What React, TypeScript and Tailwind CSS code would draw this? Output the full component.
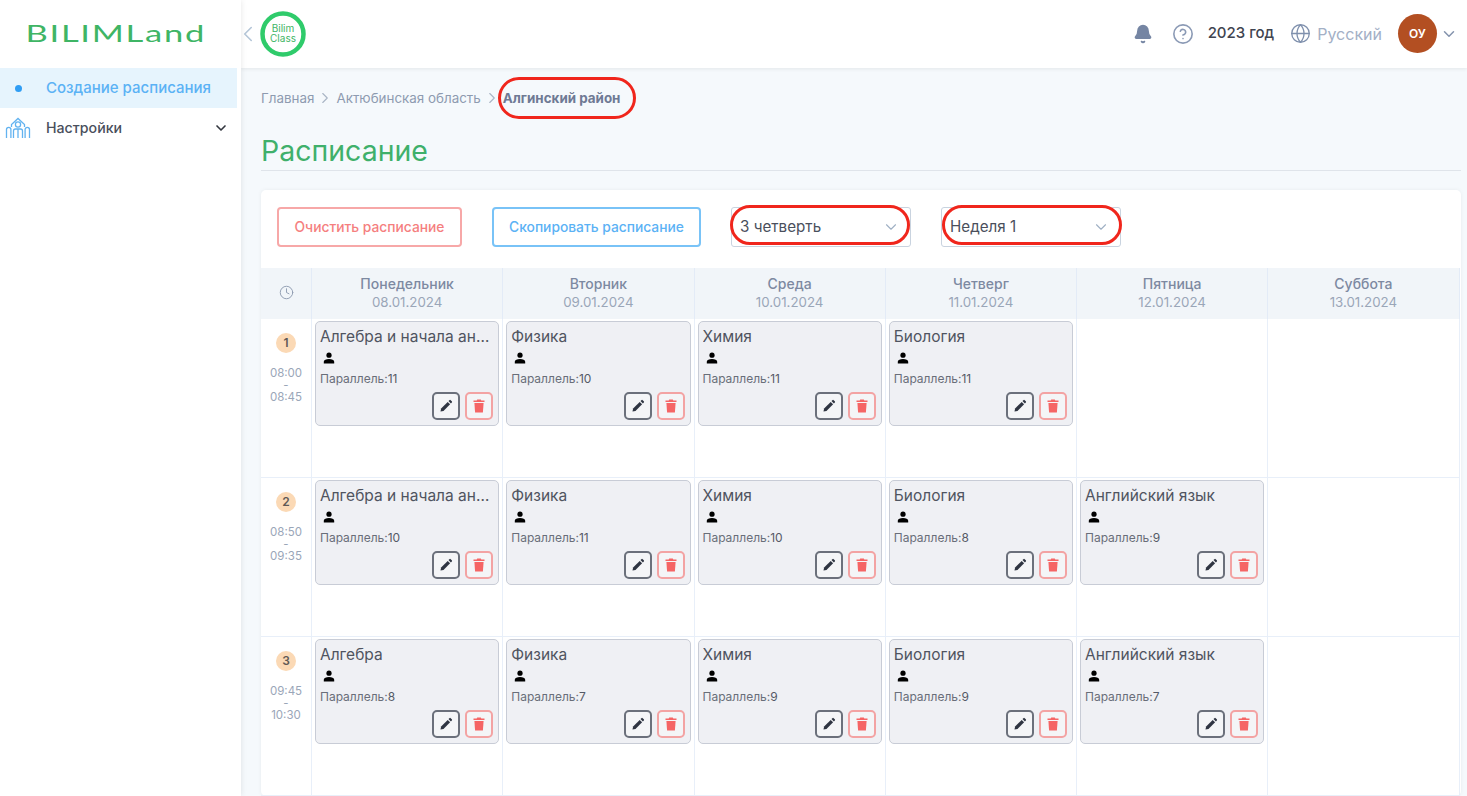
import React from 'react';
import { Bell, ChevronDown, ChevronLeft, ChevronRight, CircleHelp, Clock, Globe } from 'lucide-react';

type Lesson = { name: string; grade: number };

const days = [
  { name: 'Понедельник', date: '08.01.2024' },
  { name: 'Вторник', date: '09.01.2024' },
  { name: 'Среда', date: '10.01.2024' },
  { name: 'Четверг', date: '11.01.2024' },
  { name: 'Пятница', date: '12.01.2024' },
  { name: 'Суббота', date: '13.01.2024' },
];

const rows: { num: number; from: string; to: string; lessons: (Lesson | null)[] }[] = [
  {
    num: 1,
    from: '08:00',
    to: '08:45',
    lessons: [
      { name: 'Алгебра и начала анализа', grade: 11 },
      { name: 'Физика', grade: 10 },
      { name: 'Химия', grade: 11 },
      { name: 'Биология', grade: 11 },
      null,
      null,
    ],
  },
  {
    num: 2,
    from: '08:50',
    to: '09:35',
    lessons: [
      { name: 'Алгебра и начала анализа', grade: 10 },
      { name: 'Физика', grade: 11 },
      { name: 'Химия', grade: 10 },
      { name: 'Биология', grade: 8 },
      { name: 'Английский язык', grade: 9 },
      null,
    ],
  },
  {
    num: 3,
    from: '09:45',
    to: '10:30',
    lessons: [
      { name: 'Алгебра', grade: 8 },
      { name: 'Физика', grade: 7 },
      { name: 'Химия', grade: 9 },
      { name: 'Биология', grade: 9 },
      { name: 'Английский язык', grade: 7 },
      null,
    ],
  },
];

const PersonIcon = () => (
  <svg viewBox="0 0 12 12" className="w-3 h-3 text-black" fill="currentColor">
    <circle cx="6" cy="3.2" r="2.6" />
    <path d="M0.8 11.5V9.8C0.8 8 3.2 7 6 7s5.2 1 5.2 2.8v1.7z" />
  </svg>
);

const PencilIcon = () => (
  <svg viewBox="0 0 14 14" className="w-3.5 h-3.5 text-[#2f3542]" fill="currentColor">
    <path d="M1.5 12.5l.6-3 6.6-6.6 2.4 2.4-6.6 6.6z" />
    <path d="M9.5 2.1l.9-.9a.9.9 0 011.3 0l1.1 1.1a.9.9 0 010 1.3l-.9.9z" />
  </svg>
);

const TrashIcon = () => (
  <svg viewBox="0 0 12 14" className="w-3 h-3.5 text-[#f56565]" fill="currentColor">
    <path d="M4.2 0.5h3.6l.5 1H11.5v1.6H.5V1.5h3.2z" />
    <path d="M1.4 4h9.2l-.7 9.5H2.1z" />
  </svg>
);

const SchoolIcon = () => (
  <svg viewBox="0 0 26 22" className="w-[26px] h-[22px] text-[#63b3f0]" fill="none" stroke="currentColor" strokeWidth="1.3">
    <path d="M6.5 10V7.5L13 1.5l6.5 6V10" />
    <circle cx="13" cy="7.5" r="2.6" />
    <path d="M1.5 21v-8.5a2.2 2.2 0 014.4 0V21" />
    <path d="M20.1 21v-8.5a2.2 2.2 0 014.4 0V21" />
    <path d="M8.5 21v-7a2 2 0 012-2h5a2 2 0 012 2v7" />
    <path d="M13 12v9" />
  </svg>
);

const ClassLogo = () => (
  <div className="relative -ml-[1px] w-[46px] h-[46px] flex items-center justify-center">
    <svg viewBox="0 0 46 46" className="absolute inset-0 w-full h-full text-[#2fcb6b]" fill="none" stroke="currentColor" strokeWidth="4.5">
      <circle cx="23" cy="23" r="20.5" />
      <path d="M8 38l-1.500-5.500" strokeWidth="2" />
    </svg>
    <div className="flex flex-col items-center text-[#3fb565] text-[10px] leading-[9.5px]">
      <span>Bilim</span>
      <span>Class</span>
    </div>
  </div>
);

const LessonCard = ({ lesson }: { lesson: Lesson }) => (
  <div className="h-[105px] rounded-[5px] border border-[#c8ccd6] bg-[#eff0f4] px-[4px] pt-[4px] relative">
    <div className="text-[15.5px] leading-[22px] text-[#4f5460] truncate">{lesson.name}</div>
    <div className="h-[20px] pl-[3px] flex items-center">
      <PersonIcon />
    </div>
    <div className="text-[12px] leading-[16px] mt-[3px] text-[#696e79]">
      Параллель:<span className="text-[#555a66]">{lesson.grade}</span>
    </div>
    <div className="absolute right-[5px] bottom-[5px] flex gap-[5px]">
      <button className="w-[28px] h-[28px] rounded-[5px] border-2 border-[#6b707b] bg-[#f4f5f7] flex items-center justify-center">
        <PencilIcon />
      </button>
      <button className="w-[28px] h-[28px] rounded-[5px] border-2 border-[#f3a3a3] bg-[#f4f5f7] flex items-center justify-center">
        <TrashIcon />
      </button>
    </div>
  </div>
);

const SelectBox = ({ label, ringClass }: { label: string; ringClass: string }) => (
  <div className="relative w-[180px] h-[40px] rounded-[3px] border border-[#c9d3df] bg-white flex items-center justify-between pl-[8px] pr-[10px]">
    <span className="text-[15.2px] text-[#4a4f5c]">{label}</span>
    <ChevronDown className="w-[18px] h-[18px] text-[#9fb0c4]" strokeWidth={1.5} />
    <div className={ringClass} />
  </div>
);

export default function App() {
  return (
    <div className="h-[796px] w-[1467px] overflow-hidden flex bg-[#f5f9fc] font-['Inter','Liberation_Sans',sans-serif]">
      <aside className="w-[241px] shrink-0 bg-white shadow-[0_0_6px_rgba(0,0,0,0.1)] z-10">
        <div className="h-[68px] flex items-center justify-center pr-[9px] pb-[2px]">
          <span className="text-[#3fb565] text-[24px] font-['Lato',sans-serif] tracking-[1.2px] scale-x-[1.44] leading-none">
            BILIMLand
          </span>
        </div>
        <div className="h-[40px] w-[237px] bg-[#e6f4fd] flex items-center pl-[15px] gap-[24px]">
          <span className="w-[7px] h-[7px] rounded-full bg-[#2f9df4]" />
          <span className="text-[#5bb2f5] text-[15px] font-medium">Создание расписания</span>
        </div>
        <div className="h-[40px] flex items-center pl-[5px] pr-[12px]">
          <SchoolIcon />
          <span className="ml-[15px] text-[14.2px] font-medium text-[#4a4f5c] flex-1">Настройки</span>
          <ChevronDown className="w-[16px] h-[16px] text-[#33373f]" strokeWidth={2.5} />
        </div>
      </aside>

      <div className="flex-1 min-w-0 flex flex-col">
        <header className="h-[68px] shrink-0 bg-white shadow-[0_1px_4px_rgba(0,0,0,0.08)] flex items-center pb-[1px]">
          <ChevronLeft className="ml-[-6px] w-[26px] h-[26px] text-[#b5c6d8]" strokeWidth={1.5} />
          <ClassLogo />
          <div className="ml-auto flex items-center pr-[9px]">
            <Bell className="w-[20px] h-[20px] text-[#7585a3]" fill="#7585a3" />
            <CircleHelp className="ml-[19px] w-[22px] h-[22px] text-[#8b9ab5]" strokeWidth={1.75} />
            <span className="ml-[14px] text-[15px] font-medium text-[#3f4450]">2023 год</span>
            <Globe className="ml-[16px] w-[21px] h-[21px] text-[#7f90ad]" strokeWidth={1.5} />
            <span className="ml-[6px] text-[16px] text-[#a3b0c6]">Русский</span>
            <div className="ml-[16px] w-[39px] h-[39px] rounded-full bg-[#b34f22] flex items-center justify-center text-white text-[12px] font-semibold">
              ОУ
            </div>
            <ChevronDown className="ml-[3px] w-[18px] h-[18px] text-[#8493ad]" strokeWidth={2} />
          </div>
        </header>

        <main className="flex-1 min-h-0 pl-[20px] pr-[6px]">
          <nav className="h-[22px] mt-[19px] flex items-center text-[13.4px] text-[#8e9bb0]">
            <span>Главная</span>
            <ChevronRight className="mx-[2px] w-[18px] h-[18px] text-[#a9b5c5]" strokeWidth={1.5} />
            <span>Актюбинская область</span>
            <ChevronRight className="mx-[2px] w-[18px] h-[18px] text-[#a9b5c5]" strokeWidth={1.5} />
            <span className="relative font-bold text-[#6f7a94]">
              Алгинский район
              <span className="absolute -left-[5px] -top-[11px] w-[138px] h-[42px] rounded-[21px] border-[3px] border-[#f0261c]" />
            </span>
          </nav>
          <h1 className="mt-[22px] h-[40px] text-[28.5px] leading-[40px] text-[#3fb06b] border-b border-[#dfe4ea]">Расписание</h1>

          <section className="mt-[19px] bg-white rounded-[5px] shadow-[0_0_4px_rgba(0,0,0,0.06)]">
            <div className="h-[78px] flex items-start pt-[17px] pl-[16px]">
              <button className="w-[185px] h-[40px] rounded-[4px] border-2 border-[#f7a8a8] text-[13.8px] text-[#f57f7f] font-medium">
                Очистить расписание
              </button>
              <button className="ml-[30px] w-[209px] h-[40px] rounded-[4px] border-2 border-[#79c3f7] text-[13.8px] text-[#5bb2f5] font-medium">
                Скопировать расписание
              </button>
              <div className="ml-[30px]">
                <SelectBox
                  label="3 четверть"
                  ringClass="absolute -left-[2px] -top-[3px] w-[180px] h-[40px] rounded-[20px] border-[3px] border-[#f0261c]"
                />
              </div>
              <div className="ml-[30px]">
                <SelectBox
                  label="Неделя 1"
                  ringClass="absolute left-[0px] -top-[3px] w-[180px] h-[40px] rounded-[20px] border-[3px] border-[#f0261c]"
                />
              </div>
            </div>

            <div className="w-[1199px] grid grid-cols-[51px_repeat(6,191.25px)] grid-rows-[51px_159px_159px_159px]">
              <div className="bg-[#f1f5f9] border-r border-[#e3ebf7] flex items-center justify-center pb-[2px]">
                <Clock className="w-[15px] h-[15px] text-[#8e9bb0]" strokeWidth={1.5} />
              </div>
              {days.map((d) => (
                <div
                  key={d.name}
                  className="bg-[#f1f5f9] border-r border-[#e3ebf7] flex flex-col items-center justify-center leading-[18px] pb-[2px]"
                >
                  <span className="text-[14px] text-[#7d89a1] font-medium">{d.name}</span>
                  <span className="text-[13.3px] text-[#9aa6b8]">{d.date}</span>
                </div>
              ))}
              {rows.map((row) => (
                <React.Fragment key={row.num}>
                  <div className="border-r border-b border-[#e8eff9] flex flex-col items-center pt-[14px]">
                    <span className="w-[20px] h-[20px] rounded-full bg-[#fbd9b5] flex items-center justify-center text-[12px] font-semibold text-[#5f5a55]">
                      {row.num}
                    </span>
                    <div className="mt-[14px] text-[11.5px] leading-[12px] text-[#9aa6b8] text-center">
                      <div>{row.from}</div>
                      <div>-</div>
                      <div>{row.to}</div>
                    </div>
                  </div>
                  {row.lessons.map((lesson, i) => (
                    <div key={i} className="border-r border-b border-[#e8eff9] pt-[2px] pl-[3px] pr-[3px]">
                      {lesson && <LessonCard lesson={lesson} />}
                    </div>
                  ))}
                </React.Fragment>
              ))}
            </div>
          </section>
        </main>
      </div>
    </div>
  );
}
